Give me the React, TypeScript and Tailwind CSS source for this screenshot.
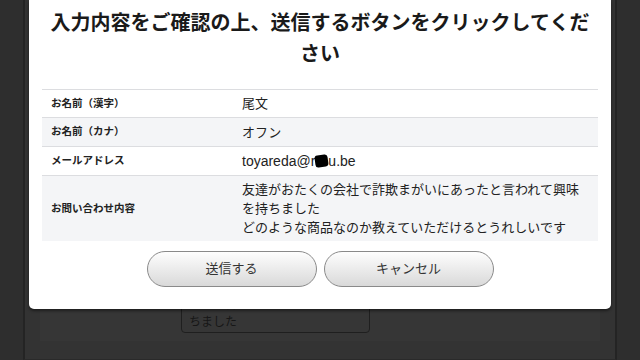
import React from 'react';

const rows = [
  { label: 'お名前（漢字）', value: '尾文', h: 'h-[28px]', bg: 'bg-white' },
  { label: 'お名前（カナ）', value: 'オフン', h: 'h-[29px]', bg: 'bg-[#f4f5f7]' },
];

const App: React.FC = () => {
  return (
    <div
      className="relative flex w-[640px] h-[360px] overflow-hidden bg-[#2e2e2e]"
      style={{ fontFamily: '"Liberation Sans", "Noto Sans CJK JP", sans-serif' }}
    >
      {/* page behind the dialog */}
      <div className="w-[23px] shrink-0" />
      <div className="flex-1 flex flex-col bg-[#333333] border-l-2 border-r-2 border-[#242424] border-b border-b-[#2a2a2a]">
        <div className="flex-1 flex flex-col justify-end mx-[15px] mb-[18px] bg-[#363636]">
          <div className="ml-[141px] mb-[8px] w-[189px] h-[70px] flex flex-col justify-end overflow-hidden rounded-[4px] border border-[#1f1f1f] px-[7px] pb-[1px] text-[12px] leading-[18px] text-[#161616]">
            <div className="whitespace-nowrap">ったと言われて興味を持</div>
            <div>ちました</div>
          </div>
        </div>
      </div>
      <div className="w-[23px] shrink-0" />

      {/* confirm dialog */}
      <div className="absolute left-[29px] top-0 w-[582px] h-[309px] bg-white rounded-b-[5px] shadow-[0_2px_3px_rgba(0,0,0,0.45)] px-[13px] pt-[8px]">
        <h2 className="text-center text-[20px] leading-[31px] font-bold text-[#1a1a1a] px-[8px]">
          入力内容をご確認の上、送信するボタンをクリックしてください
        </h2>

        <div className="mt-[19px] text-[#222]">
          {rows.map((r) => (
            <div key={r.label} className={`flex items-center border-t border-[#dcdde0] ${r.h} ${r.bg}`}>
              <div className="w-[200px] pl-[9px] text-[10.5px] font-bold">{r.label}</div>
              <div className="text-[13px] leading-[19px]">{r.value}</div>
            </div>
          ))}
          <div className="flex items-center border-t border-[#dcdde0] h-[29px] bg-white">
            <div className="w-[200px] pl-[9px] text-[10.5px] font-bold">メールアドレス</div>
            <div className="flex items-center text-[14px] leading-[19px]">
              toyareda@r
              <span className="inline-block w-[13px] h-[12px] bg-black rounded-[3px] rotate-[-8deg]" />
              u.be
            </div>
          </div>
          <div className="flex items-center border-t border-[#dcdde0] h-[66px] bg-[#f4f5f7]">
            <div className="w-[200px] shrink-0 pl-[9px] text-[10.5px] font-bold">お問い合わせ内容</div>
            <div className="text-[13px] leading-[19px] pr-[10px]">
              友達がおたくの会社で詐欺まがいにあったと言われて興味を持ちました
              <br />
              どのような商品なのか教えていただけるとうれしいです
            </div>
          </div>
        </div>

        <div className="mt-[10px] flex justify-center gap-[7px]">
          <button className="w-[170px] h-[36px] rounded-full border border-[#8a8a8a] bg-gradient-to-b from-[#fefefe] to-[#d9d9d9] text-[13px] text-[#333]">
            送信する
          </button>
          <button className="w-[170px] h-[36px] rounded-full border border-[#8a8a8a] bg-gradient-to-b from-[#fefefe] to-[#d9d9d9] text-[13px] text-[#333]">
            キャンセル
          </button>
        </div>
      </div>
    </div>
  );
};

export default App;
